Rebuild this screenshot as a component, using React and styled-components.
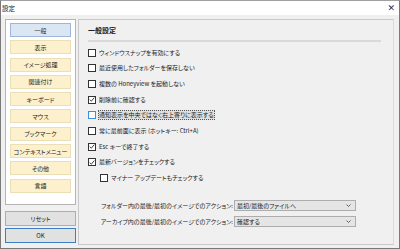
import React from 'react';
import styled, { createGlobalStyle } from 'styled-components';

const GlobalStyle = createGlobalStyle`
  html, body {
    margin: 0;
    padding: 0;
    background: #ffffff;
  }
  body {
    font-family: "Noto Sans CJK JP", "Noto Sans", sans-serif;
    font-feature-settings: "palt";
    color: #1a1a1a;
  }
`;

const Window = styled.div`
  width: 400px;
  height: 249px;
  box-sizing: border-box;
  border: 1px solid #7a7a7a;
  border-top-color: #a0a0a0;
  display: flex;
  flex-direction: column;
  background: #f0f0f0;
  overflow: hidden;
`;

const TitleBar = styled.div`
  height: 14px;
  background: #ffffff;
  display: flex;
  align-items: center;
  justify-content: space-between;
  padding: 0 4px 0 1px;
  font-size: 6.5px;
  flex-shrink: 0;
`;

const Close = styled.span`
  font-size: 9px;
  color: #333;
  font-family: "DejaVu Sans", sans-serif;
  line-height: 1;
`;

const Body = styled.div`
  flex: 1;
  display: flex;
  gap: 2px;
  padding: 4px 5px 3px 4px;
`;

const Sidebar = styled.div`
  width: 71px;
  display: flex;
  flex-direction: column;
`;

const NavPanel = styled.div`
  height: 186px;
  box-sizing: border-box;
  background: #ffffff;
  border: 1px solid #b4b4b4;
  padding: 3px 4px 0 4px;
  display: flex;
  flex-direction: column;
  gap: 3.3px;
`;

const NavItem = styled.div`
  height: 14px;
  box-sizing: border-box;
  border: 1px solid ${(p) => (p.active ? '#9fb6d8' : '#eadfb6')};
  background: ${(p) => (p.active ? '#dbe6f5' : '#fcf1cc')};
  display: flex;
  align-items: center;
  justify-content: center;
  font-size: 6px;
  white-space: nowrap;
`;

const SideButton = styled.div`
  height: 15px;
  box-sizing: border-box;
  margin: ${(p) => (p.first ? '6px 0 0' : '2px 0 0')};
  border: ${(p) => (p.primary ? '1.5px solid #3c7fc4' : '1px solid #adadad')};
  background: #e1e1e1;
  display: flex;
  align-items: center;
  justify-content: center;
  font-size: 6px;
`;

const Content = styled.div`
  flex: 1;
  box-sizing: border-box;
  border: 1px solid #c8c8c8;
  border-right-color: #dcdcdc;
  background: #f0f0f0;
  padding: 4px 12px 0 9px;
  display: flex;
  flex-direction: column;
`;

const Heading = styled.div`
  font-size: 7px;
  font-weight: 700;
  height: 12px;
  line-height: 12px;
`;

const Separator = styled.div`
  height: 2px;
  background: #d9d9d9;
  margin: 4px 0 3px;
`;

const CheckRow = styled.div`
  height: 15.66px;
  display: flex;
  align-items: center;
  padding-left: ${(p) => (p.indent ? '12px' : '0')};
  font-size: 6px;
`;

const Box = styled.span`
  width: 8px;
  height: 8px;
  box-sizing: border-box;
  border: 1px solid ${(p) => (p.hover ? '#3b8ee0' : '#333333')};
  background: #ffffff;
  margin-right: 2px;
  display: flex;
  align-items: center;
  justify-content: center;
  flex-shrink: 0;
`;

const Label = styled.span`
  padding: 0 1px;
  line-height: 10px;
  white-space: nowrap;
  ${(p) =>
    p.focus &&
    `
    background: #e0e0e0;
    outline: 1px dotted #555;
    outline-offset: -1px;
  `}
`;

const SelectGroup = styled.div`
  margin-top: 14px;
  display: grid;
  grid-template-columns: 146px 122px;
  row-gap: 5px;
  align-items: center;
`;

const SelectLabel = styled.div`
  font-size: 6px;
  text-align: right;
  white-space: nowrap;
  padding-right: 1px;
`;

const Select = styled.div`
  height: 11px;
  box-sizing: border-box;
  border: 1px solid #adadad;
  background: #e5e5e5;
  display: flex;
  align-items: center;
  justify-content: space-between;
  padding: 0 4px 0 2px;
  font-size: 6px;
`;

const Check = () => (
  <svg width="7" height="7" viewBox="0 0 7 7">
    <path d="M0.8 3.6 L2.7 5.5 L6.2 1.2" fill="none" stroke="#222" strokeWidth="1" />
  </svg>
);

const Chevron = () => (
  <svg width="5" height="3" viewBox="0 0 5 3">
    <path d="M0.5 0.5 L2.5 2.5 L4.5 0.5" fill="none" stroke="#444" strokeWidth="0.8" />
  </svg>
);

const navItems = [
  '一般',
  '表示',
  'イメージ処理',
  '関連付け',
  'キーボード',
  'マウス',
  'ブックマーク',
  'コンテキストメニュー',
  'その他',
  '言語',
];

const options = [
  { text: 'ウィンドウスナップを有効にする' },
  { text: '最近使用したフォルダーを保存しない' },
  { text: '複数の Honeyview を起動しない' },
  { text: '削除前に確認する', checked: true },
  { text: '通知表示を中央ではなく右上寄りに表示する', focus: true },
  { text: '常に最前面に表示 (ホットキー: Ctrl+A)' },
  { text: 'Esc キーで終了する', checked: true },
  { text: '最新バージョンをチェックする', checked: true },
  { text: 'マイナー アップデートもチェックする', indent: true },
];

export default function App() {
  return (
    <>
      <GlobalStyle />
      <Window>
        <TitleBar>
          <span>設定</span>
          <Close>✕</Close>
        </TitleBar>
        <Body>
          <Sidebar>
            <NavPanel>
              {navItems.map((item, i) => (
                <NavItem key={item} active={i === 0}>
                  {item}
                </NavItem>
              ))}
            </NavPanel>
            <SideButton first>リセット</SideButton>
            <SideButton primary>OK</SideButton>
          </Sidebar>
          <Content>
            <Heading>一般設定</Heading>
            <Separator />
            {options.map((o) => (
              <CheckRow key={o.text} indent={o.indent}>
                <Box hover={o.focus}>{o.checked && <Check />}</Box>
                <Label focus={o.focus}>{o.text}</Label>
              </CheckRow>
            ))}
            <SelectGroup>
              <SelectLabel>フォルダー内の最後/最初のイメージでのアクション:</SelectLabel>
              <Select>
                <span>最初/最後のファイルへ</span>
                <Chevron />
              </Select>
              <SelectLabel>アーカイブ内の最後/最初のイメージでのアクション:</SelectLabel>
              <Select>
                <span>確認する</span>
                <Chevron />
              </Select>
            </SelectGroup>
          </Content>
        </Body>
      </Window>
    </>
  );
}
